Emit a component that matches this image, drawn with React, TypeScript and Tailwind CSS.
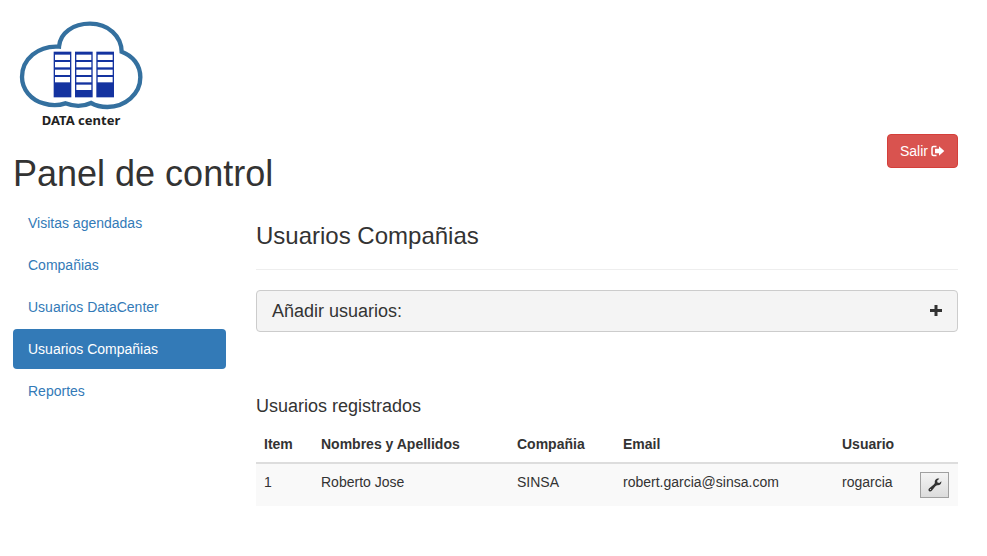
import React from "react";

const navItems = [
  "Visitas agendadas",
  "Compañias",
  "Usuarios DataCenter",
  "Usuarios Compañias",
  "Reportes",
];

const users = [
  { item: 1, name: "Roberto Jose", company: "SINSA", email: "robert.garcia@sinsa.com", user: "rogarcia" },
];

function Rack({ x, cells }: { x: number; cells: number }) {
  const rows = [134, 156, 179, 201, 224].slice(0, cells);
  return (
    <g>
      <rect x={x} y={125} width={53} height={137} fill="#1433a0" />
      {rows.map((y) => (
        <rect key={y} x={x + 4} y={y} width={45} height={16} fill="#fff" />
      ))}
    </g>
  );
}

function Logo() {
  return (
    <div className="ml-[5px] flex w-[126px] flex-col">
      <svg viewBox="54 33 378 267" className="h-[89px] w-[126px]" aria-hidden="true">
        <path
          d="M177 110C180 68 220 41 270 41C325 41 364 78 365 125C398 137 421 165 421 202C421 252 376 291 322 291C303 291 287 287 273 279C248 291 219 289 196 280C176 287 153 287 131 280C93 270 66 238 66 201C66 148 114 106 177 110Z"
          fill="#fff"
          stroke="#34709f"
          strokeWidth="13"
        />
        <Rack x={161} cells={4} />
        <Rack x={225} cells={5} />
        <Rack x={289} cells={4} />
      </svg>
      <span className="text-center font-['Noto_Sans',sans-serif] text-[13px] leading-5 font-bold text-[#222]">
        DATA center
      </span>
    </div>
  );
}

function LogOutIcon() {
  return (
    <svg viewBox="0 0 14 14" className="h-3.5 w-3.5" aria-hidden="true">
      <path d="M5.500 2.500H2.500Q1 2.500 1 4V10Q1 11.500 2.500 11.500H5.500" fill="none" stroke="currentColor" strokeWidth="1.500" />
      <path d="M8 2.200L13.300 7L8 11.800V9.200H4V4.800H8Z" fill="currentColor" />
    </svg>
  );
}

function PlusIcon() {
  return (
    <svg viewBox="0 0 12 12" className="h-3 w-3" fill="currentColor" aria-hidden="true">
      <path d="M4.500 0H7.500V4H12V7H7.500V11H4.500V7H0V4H4.500Z" />
    </svg>
  );
}

function WrenchIcon() {
  return (
    <svg viewBox="0 0 14 14" className="h-3.5 w-3.5" fill="currentColor" aria-hidden="true">
      <path d="M11.300 .7C8.500 .1 6.200 2.200 6.900 5.100L5.800 6.500L1.300 10.200C.2 11.100.2 12.200 1 13C1.800 13.800 2.900 13.700 3.800 12.700L7.400 8.300L9 7.200C11.300 7.800 13.500 6.200 13.400 3.300L11.300 5L9.500 4.600L9.100 2.700Z" />
      <circle cx="2.500" cy="11.500" r=".6" fill="#e4e4e4" />
    </svg>
  );
}

export default function App() {
  return (
    <div className="bg-white pt-[21px] pr-[29px] pb-12 pl-[13px] font-['Liberation_Sans',Arial,sans-serif] text-sm leading-5 text-[#333]">
      <header className="flex items-end justify-between">
        <div>
          <Logo />
          <h1 className="mt-6 text-4xl leading-10">Panel de control</h1>
        </div>
        <button
          type="button"
          className="mb-[26px] flex items-center gap-[3px] rounded border border-[#d43f3a] bg-[#d9534f] px-3 py-1.5 text-white"
        >
          Salir
          <LogOutIcon />
        </button>
      </header>

      <div className="mt-[9px] flex gap-[30px]">
        <nav className="flex w-[213px] shrink-0 flex-col gap-0.5">
          {navItems.map((label) => (
            <a
              key={label}
              href="#"
              className={
                label === "Usuarios Compañias"
                  ? "rounded bg-[#337ab7] px-[15px] py-2.5 text-white"
                  : "rounded px-[15px] py-2.5 text-[#337ab7]"
              }
            >
              {label}
            </a>
          ))}
        </nav>

        <main className="min-w-0 flex-1 pt-5">
          <h2 className="text-2xl leading-[26px]">Usuarios Compañias</h2>
          <hr className="my-5 border-t border-[#eee]" />
          <button
            type="button"
            className="flex w-full items-center justify-between rounded border border-[#ccc] bg-[#f4f4f4] px-[15px] py-2.5 text-left"
          >
            <span className="text-lg leading-5">Añadir usuarios:</span>
            <PlusIcon />
          </button>

          <h3 className="mt-16 text-lg leading-5">Usuarios registrados</h3>
          <table className="mt-2.5 w-full table-fixed border-collapse text-left">
            <colgroup>
              <col className="w-[57px]" />
              <col className="w-[196px]" />
              <col className="w-[106px]" />
              <col />
              <col className="w-[78px]" />
              <col className="w-[46px]" />
            </colgroup>
            <thead>
              <tr className="border-b-2 border-[#ddd]">
                <th className="p-2">Item</th>
                <th className="p-2">Nombres y Apellidos</th>
                <th className="p-2">Compañia</th>
                <th className="p-2">Email</th>
                <th className="p-2">Usuario</th>
                <th className="p-2" />
              </tr>
            </thead>
            <tbody>
              {users.map((u) => (
                <tr key={u.item} className="bg-[#f9f9f9] align-top">
                  <td className="p-2">{u.item}</td>
                  <td className="p-2">{u.name}</td>
                  <td className="p-2">{u.company}</td>
                  <td className="p-2">{u.email}</td>
                  <td className="p-2">{u.user}</td>
                  <td className="p-2">
                    <button
                      type="button"
                      aria-label="Editar"
                      className="flex h-[26px] w-[29px] items-center justify-center border border-[#a0a0a0] bg-linear-to-b from-[#f4f4f4] to-[#dcdcdc]"
                    >
                      <WrenchIcon />
                    </button>
                  </td>
                </tr>
              ))}
            </tbody>
          </table>
        </main>
      </div>
    </div>
  );
}
